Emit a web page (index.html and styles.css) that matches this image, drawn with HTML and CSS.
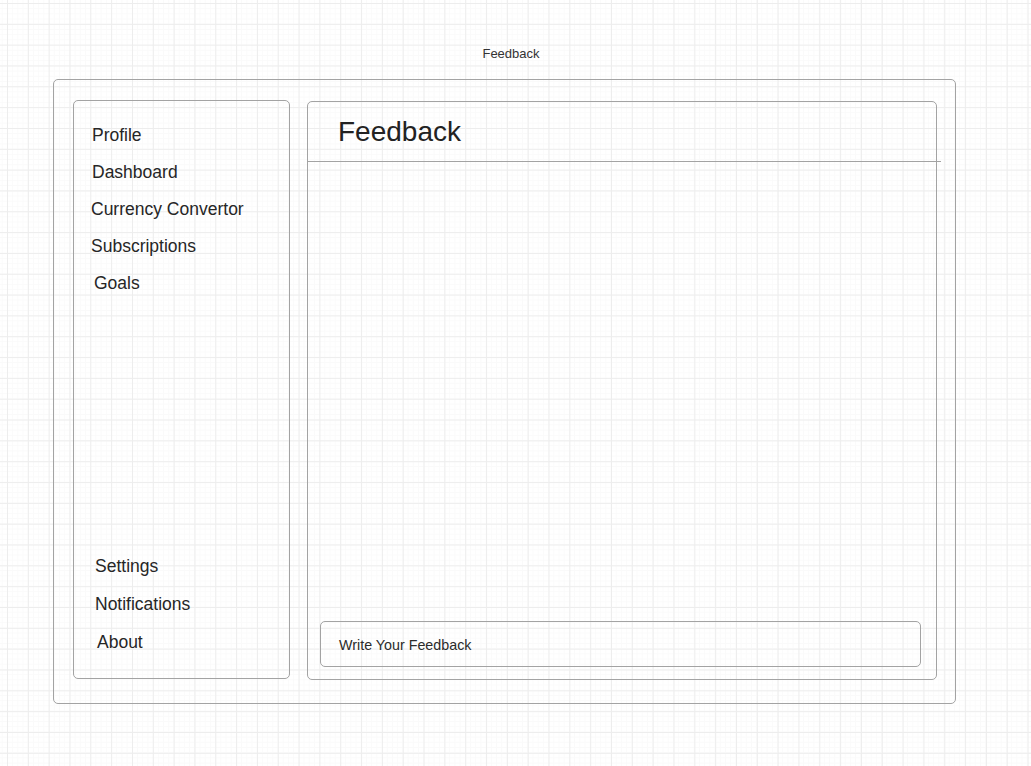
FILE: index.html
```html
<!DOCTYPE html>
<html>
<head>
  <title>Feedback</title>
  <link rel="stylesheet" href="styles.css">
</head>
<body>
  <div class="canvas">
    <div class="page-title">Feedback</div>

    <div class="frame">
      <!-- left navigation -->
      <div class="sidebar">
        <ul class="nav nav-top">
          <li>Profile</li>
          <li>Dashboard</li>
          <li class="nudge-left">Currency Convertor</li>
          <li class="nudge-left">Subscriptions</li>
          <li class="goals">Goals</li>
        </ul>
        <ul class="nav nav-bottom">
          <li>Settings</li>
          <li>Notifications</li>
          <li class="about">About</li>
        </ul>
      </div>

      <!-- feedback panel -->
      <div class="main">
        <div class="main-header">Feedback</div>
        <div class="main-body"></div>
        <div class="feedback-input">Write Your Feedback</div>
      </div>
    </div>
  </div>
</body>
</html>
```

FILE: styles.css
```css
html, body {
  margin: 0;
  padding: 0;
}

body {
  font-family: "Liberation Sans", Arial, sans-serif;
  color: #262626;
  background-color: #fff;
}

.canvas {
  width: 1031px;
  height: 766px;
  box-sizing: border-box;
  padding-top: 46px;
  background-color: #fff;
  background-image:
    linear-gradient(to right, #ededed 1px, transparent 1px),
    linear-gradient(to bottom, #ededed 1px, transparent 1px),
    linear-gradient(to right, #fafafa 1px, transparent 1px),
    linear-gradient(to bottom, #fafafa 1px, transparent 1px);
  background-size: 20.83px 20.83px, 20.83px 20.83px, 5.21px 5.21px, 5.21px 5.21px;
  background-position: 7px 3px, 7px 3px, 7px 3px, 7px 3px;
}

.page-title {
  text-align: center;
  font-size: 13px;
  line-height: 16px;
  color: #333;
  padding-right: 9px;
}

.frame {
  display: flex;
  align-items: flex-start;
  width: 903px;
  height: 625px;
  box-sizing: border-box;
  margin: 17px 0 0 53px;
  padding: 20px 0 0 19px;
  border: 1px solid #a3a3a3;
  border-radius: 5px;
  gap: 17px;
}

.sidebar {
  display: flex;
  flex-direction: column;
  width: 217px;
  height: 579px;
  box-sizing: border-box;
  border: 1px solid #a3a3a3;
  border-radius: 5px;
}

.nav {
  list-style: none;
  margin: 0;
  padding: 0;
  font-size: 17.5px;
  line-height: 20px;
}

.nav-top {
  padding: 24px 0 0 18px;
}

.nav-top li {
  margin-bottom: 17px;
}

.nav-top .nudge-left {
  margin-left: -1px;
}

.nav-top .goals {
  margin-top: 3px;
  margin-left: 2px;
}

.nav-bottom {
  margin-top: auto;
  padding: 0 0 26px 21px;
}

.nav-bottom li + li {
  margin-top: 18px;
}

.nav-bottom .about {
  margin-left: 2px;
}

.main {
  display: flex;
  flex-direction: column;
  width: 630px;
  height: 579px;
  margin-top: 1px;
  box-sizing: border-box;
  border: 1px solid #a3a3a3;
  border-radius: 5px;
}

.main-header {
  height: 59px;
  line-height: 60px;
  font-size: 28px;
  padding-left: 30px;
  border-bottom: 1px solid #a3a3a3;
  margin-right: -5px;
  color: #222;
}

.main-body {
  flex: 1;
}

.feedback-input {
  height: 46px;
  line-height: 47px;
  margin: 0 15px 12px 12px;
  padding-left: 18px;
  box-sizing: border-box;
  border: 1px solid #a3a3a3;
  border-radius: 5px;
  font-size: 14.3px;
  color: #2b2b2b;
}
```
